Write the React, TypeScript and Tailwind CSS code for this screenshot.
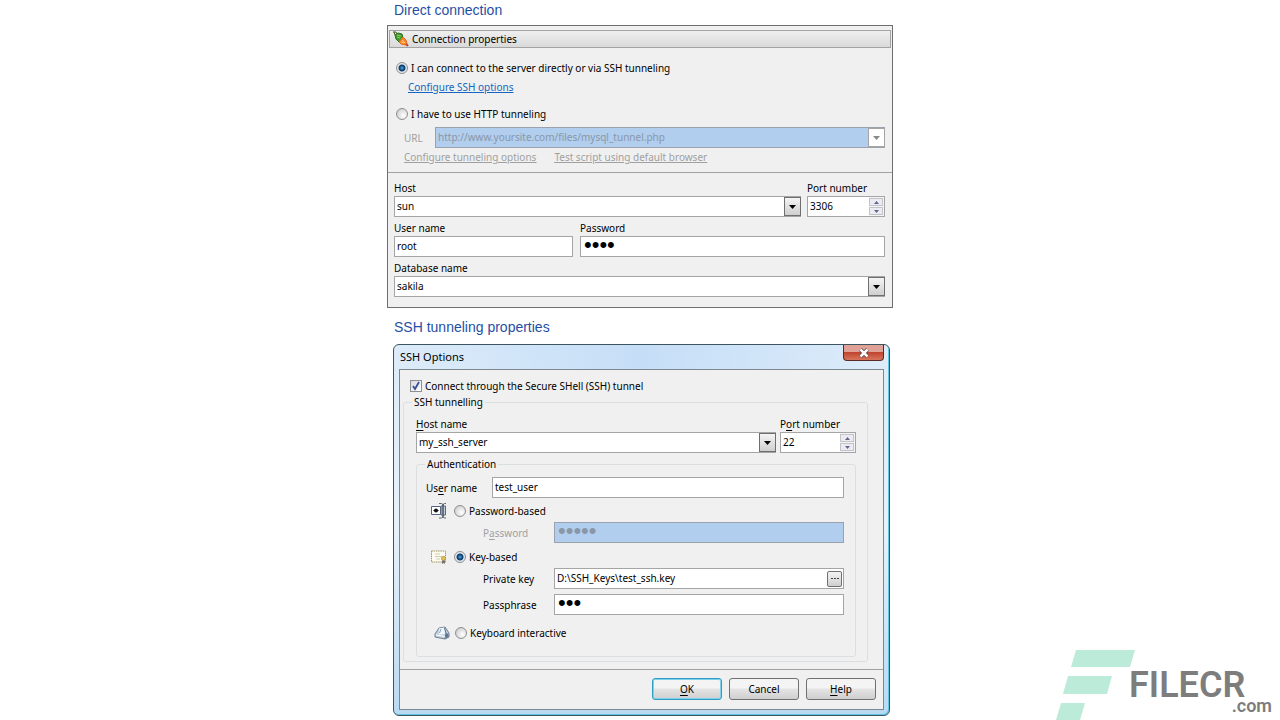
import { useState } from 'react'
import type { ReactNode } from 'react'
import clsx from 'clsx'

const box = 'block h-[21px] w-full appearance-none rounded-none border leading-[16px] outline-none'
const enabled = 'border-[#a5a5a5] bg-white text-black'
const disabledBox = 'border-[#9aa3ad] bg-[#b1ceee] text-[#8997a8]'
const plain = 'pl-[2px] pb-[2px] text-[10px]'
const dots = "pl-[3px] pb-[3px] font-['Liberation_Sans',sans-serif] text-[22px]"

function Underlined({ text, char }: { text: string; char: number }) {
  return (
    <>
      {text.slice(0, char)}
      <span className="underline underline-offset-2">{text[char]}</span>
      {text.slice(char + 1)}
    </>
  )
}

interface ComboProps {
  id: string
  value: string
  disabled?: boolean
}

function Combo({ id, value, disabled }: ComboProps) {
  return (
    <div className="relative w-full">
      <select id={id} disabled={disabled} className={clsx(box, plain, disabled ? disabledBox : enabled)}>
        <option>{value}</option>
      </select>
      <span
        className={clsx(
          'pointer-events-none absolute inset-y-0 right-0 my-px flex w-[17px] items-center justify-center border',
          disabled ? 'border-[#a5a5a5] bg-white' : 'border-[#6f6f6f] bg-linear-to-b from-[#f4f4f4] to-[#cfcfcf]',
        )}
      >
        <svg width="7" height="4" viewBox="0 0 7 4" className={disabled ? 'fill-[#8a8a8a]' : 'fill-black'}>
          <path d="M0 0h7L3.500 4z" />
        </svg>
      </span>
    </div>
  )
}

function Spinner({ id, initial }: { id: string; initial: number }) {
  const [value, setValue] = useState(initial)

  return (
    <div className="flex h-[21px] border border-[#a5a5a5] bg-white">
      <input
        id={id}
        value={value}
        inputMode="numeric"
        onChange={(e) => setValue(Number(e.target.value) || 0)}
        className="w-full min-w-0 pl-[2px] pb-px text-[10px] leading-[16px] outline-none"
      />
      <div className="flex w-[15px] shrink-0 flex-col gap-px bg-[#f4f4f4] py-px pr-px">
        <button
          type="button"
          aria-label="Increase"
          onClick={() => setValue(value + 1)}
          className="flex flex-1 items-center justify-center border border-[#c3c3cc] bg-[#ececf0]"
        >
          <svg width="5" height="3" viewBox="0 0 5 3" className="fill-[#5d6590]">
            <path d="M0 3h5L2.500 0z" />
          </svg>
        </button>
        <button
          type="button"
          aria-label="Decrease"
          onClick={() => setValue(value - 1)}
          className="flex flex-1 items-center justify-center border border-[#c3c3cc] bg-[#ececf0]"
        >
          <svg width="5" height="3" viewBox="0 0 5 3" className="fill-[#5d6590]">
            <path d="M0 0h5L2.500 3z" />
          </svg>
        </button>
      </div>
    </div>
  )
}

interface RadioProps {
  name: string
  checked: boolean
  onChange: () => void
  children: ReactNode
}

function Radio({ name, checked, onChange, children }: RadioProps) {
  return (
    <label className="flex items-center gap-[3px]">
      <input
        type="radio"
        name={name}
        checked={checked}
        onChange={onChange}
        className="size-3 shrink-0 appearance-none rounded-full border border-[#8e8f8f] bg-[radial-gradient(circle_at_65%_65%,#ffffff_0%,#e4e4e4_45%,#c2c2c2_100%)] checked:bg-[radial-gradient(circle_at_50%_50%,#5fb4e0_0%,#1f6aa8_20%,#12385f_42%,#dfe7ee_56%,#eef1f3_100%)]"
      />
      {children}
    </label>
  )
}

function PlugIcon() {
  return (
    <svg width="16" height="16" viewBox="0 0 16 16">
      <path d="M0 1h3l1 2M1 1l1 3" stroke="#4a5a1c" fill="none" />
      <path d="M2 4l3-2 4 1 1 4-4 4-3-3z" fill="#3f9a2c" stroke="#28701c" />
      <path d="M4 4l4 1M4 6l3 1" stroke="#8ed36c" />
      <path d="M6 11l4-5 3 3 1 4-2 1-4-1z" fill="#f58a2c" stroke="#e8691a" />
      <path d="M9 9l3 3M8 11l3 1" stroke="#ffc37a" />
      <path d="M13 13l2 2" stroke="#c8432a" strokeWidth="2" />
    </svg>
  )
}

function PasswordIcon() {
  return (
    <svg width="16" height="16" viewBox="0 0 16 16">
      <path d="M.5 3.500h9v8h-9z" fill="#fff" stroke="#56648a" />
      <circle cx="5" cy="7.500" r="2" fill="#111" />
      <path d="M2.500 7.500h5" stroke="#111" />
      <path d="M10 3h4.500v9H10z" fill="#c3ccda" stroke="#5f6878" />
      <path d="M8 .5h2.500l1.500 1 1.500-1H15M8 15h2.500l1.500-1 1.500 1H15" fill="none" stroke="#5d6470" />
      <path d="M12 1v13.500" stroke="#4a5464" strokeWidth="1.500" />
    </svg>
  )
}

function CertificateIcon() {
  return (
    <svg width="16" height="14" viewBox="0 0 16 14">
      <path d="M.5 1h14v11H.5z" fill="#fdfbef" stroke="#a0946a" strokeDasharray="1.500 .7" />
      <path d="M4 4h5M4 6.500h7M5 9h4" stroke="#cfcbb0" />
      <circle cx="12.500" cy="8.500" r="2" fill="#e2c750" stroke="#b79c3c" />
      <path d="M11 10.500V14l1.500-1L14 14v-3.500" fill="#77746c" />
    </svg>
  )
}

function KeyboardIcon() {
  return (
    <svg width="16" height="14" viewBox="0 0 16 14">
      <path d="M1 8l4-6 6-1 4 6v4l-4 2-10-2z" fill="#c3d0de" stroke="#6e7f92" />
      <path d="M5 2.500l5-1 1 6.500-6 .5z" fill="#f4f9fd" />
      <path d="M10.500 2l1.500 5-1 5.500" fill="none" stroke="#5a7592" />
      <path d="M12 7l2.500 1v3L12 12z" fill="#5e7690" />
      <path d="M2 9l9 1.500" fill="none" stroke="#fff" />
      <path d="M7 3L5.500 7" stroke="#7fa3c4" />
    </svg>
  )
}

function DirectConnection() {
  const [mode, setMode] = useState('direct')

  return (
    <form className="border border-[#6e6e6e] bg-[#f0f0f0] pb-[10px] pt-1">
      <div className="mx-px flex h-[18px] items-center gap-[3px] border border-[#a3a3a3] bg-linear-to-b from-[#efefef] to-[#dadada] pl-[3px]">
        <PlugIcon />
        <h2>Connection properties</h2>
      </div>
      <div className="border-b border-[#a0a0a0] pb-[7px] pl-2 pr-[7px] pt-3">
        <Radio name="mode" checked={mode === 'direct'} onChange={() => setMode('direct')}>
          I can connect to the server directly or via SSH tunneling
        </Radio>
        <a href="#ssh-options" className="ml-3 mt-[3px] block w-fit text-[#1566c0] underline">
          Configure SSH options
        </a>
        <div className="mt-[11px]">
          <Radio name="mode" checked={mode === 'http'} onChange={() => setMode('http')}>
            I have to use HTTP tunneling
          </Radio>
        </div>
        <div className="mt-[5px] flex items-center text-[#a0a0a0]">
          <label htmlFor="url" className="w-[39px] shrink-0 pl-2">
            URL
          </label>
          <Combo id="url" value="http://www.yoursite.com/files/mysql_tunnel.php" disabled />
        </div>
        <div className="mt-px flex gap-[18px] pl-2 text-[#a0a0a0] underline">
          <a href="#tunneling">Configure tunneling options</a>
          <a href="#test">Test script using default browser</a>
        </div>
      </div>
      <div className="pl-[6px] pr-[7px] pt-[7px]">
        <div className="flex gap-[6px]">
          <div className="flex-1">
            <label htmlFor="host" className="block">
              Host
            </label>
            <Combo id="host" value="sun" />
          </div>
          <div className="w-[78px]">
            <label htmlFor="port" className="block">
              Port number
            </label>
            <Spinner id="port" initial={3306} />
          </div>
        </div>
        <div className="mt-[3px] flex gap-[7px]">
          <div className="w-[179px]">
            <label htmlFor="user" className="block">
              User name
            </label>
            <input id="user" defaultValue="root" className={clsx(box, plain, enabled)} />
          </div>
          <div className="flex-1">
            <label htmlFor="password" className="block">
              Password
            </label>
            <input id="password" type="password" defaultValue="root" className={clsx(box, dots, enabled)} />
          </div>
        </div>
        <div className="mt-[3px]">
          <label htmlFor="database" className="block">
            Database name
          </label>
          <Combo id="database" value="sakila" />
        </div>
      </div>
    </form>
  )
}

const dialogButton =
  'h-[22px] w-[70px] rounded-[3px] border bg-linear-to-b from-[#f4f4f4] from-45% via-[#e4e4e4] via-50% to-[#cfcfcf] text-center'

function SshOptions() {
  const [auth, setAuth] = useState('key')

  return (
    <section
      id="ssh-options"
      className="ml-[6px] mr-[3px] rounded-[6px] border border-[#3c5560] bg-linear-to-b from-[#dcebf9] via-[#e6f1fb] to-[#b9d9f3] px-[5px] pb-[5px] shadow-[inset_-1px_-1px_0_#5fc8e0]"
    >
      <header className="flex h-6 items-start bg-linear-to-r from-transparent via-[#c5def7] to-transparent pl-px">
        <h2 className="flex-1 pt-1 text-[11px]">SSH Options</h2>
        <button
          type="button"
          aria-label="Close"
          className="flex h-4 w-[41px] items-center justify-center rounded-b-[4px] border border-t-0 border-[#5a2a28] bg-linear-to-b from-[#e0a296] from-45% via-[#c0452f] via-50% to-[#d8745c]"
        >
          <svg width="12" height="10" viewBox="0 0 12 10">
            <path d="M2.500 1.500l7 7M9.500 1.500l-7 7" stroke="#5b3a3a" strokeWidth="4" />
            <path d="M2.500 1.500l7 7M9.500 1.500l-7 7" stroke="#fff" strokeWidth="2.500" />
          </svg>
        </button>
      </header>
      <form className="border border-[#7d8790] bg-[#f0f0f0]">
        <div className="border-b border-[#a0a0a0] pb-[7px] pl-[3px] pr-[15px] pt-2">
          <label className="flex items-center gap-[3px] pl-[7px]">
            <span className="relative size-3 shrink-0">
              <input
                type="checkbox"
                defaultChecked
                className="peer block size-3 appearance-none border border-[#8e8f8f] bg-linear-to-br from-[#d5dae2] to-white"
              />
              <svg viewBox="0 0 12 12" className="pointer-events-none absolute inset-0 hidden peer-checked:block">
                <path d="M3 6l2 3 4-7" fill="none" stroke="#3a4f94" strokeWidth="1.800" />
              </svg>
            </span>
            Connect through the Secure SHell (SSH) tunnel
          </label>
          <fieldset className="rounded-[3px] border border-[#dcdfe2] pb-1 pl-3 pr-[11px]">
            <legend className="-ml-1 px-[2px]">SSH tunnelling</legend>
            <div className="mt-[6px] flex gap-1">
              <div className="flex-1">
                <label htmlFor="ssh-host" className="block">
                  <Underlined text="Host name" char={0} />
                </label>
                <Combo id="ssh-host" value="my_ssh_server" />
              </div>
              <div className="w-[76px]">
                <label htmlFor="ssh-port" className="block">
                  <Underlined text="Port number" char={1} />
                </label>
                <Spinner id="ssh-port" initial={22} />
              </div>
            </div>
            <fieldset className="mt-[3px] rounded-[3px] border border-[#dcdfe2] pb-[15px] pl-[9px] pr-[11px]">
              <legend className="-ml-px px-[2px]">Authentication</legend>
              <div className="mt-[5px] flex items-center">
                <label htmlFor="ssh-user" className="w-[66px] shrink-0">
                  <Underlined text="User name" char={2} />
                </label>
                <input id="ssh-user" defaultValue="test_user" className={clsx(box, plain, enabled)} />
              </div>
              <div className="mt-[5px] flex items-center gap-[7px] pl-[5px]">
                <PasswordIcon />
                <Radio name="auth" checked={auth === 'password'} onChange={() => setAuth('password')}>
                  Password-based
                </Radio>
              </div>
              <div className="mt-[3px] flex items-center pl-[57px]">
                <label htmlFor="ssh-password" className="w-[71px] shrink-0 text-[#a0a0a0]">
                  <Underlined text="Password" char={1} />
                </label>
                <input
                  id="ssh-password"
                  type="password"
                  disabled
                  defaultValue="pass1"
                  className={clsx(box, dots, disabledBox)}
                />
              </div>
              <div className="mt-[6px] flex items-center gap-[7px] pl-[5px]">
                <CertificateIcon />
                <Radio name="auth" checked={auth === 'key'} onChange={() => setAuth('key')}>
                  Key-based
                </Radio>
              </div>
              <div className="mt-[3px] flex items-center pl-[57px]">
                <label htmlFor="private-key" className="w-[71px] shrink-0">
                  Private key
                </label>
                <div className="flex h-[21px] w-full items-center border border-[#a5a5a5] bg-white pr-px">
                  <input
                    id="private-key"
                    defaultValue="D:\SSH_Keys\test_ssh.key"
                    className="min-w-0 flex-1 pb-px pl-[2px] text-[10px] leading-[16px] outline-none"
                  />
                  <button
                    type="button"
                    aria-label="Browse"
                    className="flex h-4 w-[15px] items-center justify-center rounded-[2px] border border-[#707070] bg-linear-to-b from-[#f4f4f4] to-[#cfcfcf]"
                  >
                    <svg width="8" height="2" viewBox="0 0 8 2" className="fill-[#444]">
                      <path d="M0 0h2v1H0zM3 0h2v1H3zM6 0h2v1H6z" />
                    </svg>
                  </button>
                </div>
              </div>
              <div className="mt-[5px] flex items-center pl-[57px]">
                <label htmlFor="passphrase" className="w-[71px] shrink-0">
                  Passphrase
                </label>
                <input id="passphrase" type="password" defaultValue="key" className={clsx(box, dots, enabled)} />
              </div>
              <div className="mt-[10px] flex items-center gap-[5px] pl-2">
                <KeyboardIcon />
                <Radio name="auth" checked={auth === 'keyboard'} onChange={() => setAuth('keyboard')}>
                  Keyboard interactive
                </Radio>
              </div>
            </fieldset>
          </fieldset>
        </div>
        <div className="flex justify-end gap-[7px] pb-[9px] pr-[7px] pt-2">
          <button type="button" className={clsx(dialogButton, 'border-[#2f9cc4] shadow-[inset_0_0_0_1px_#7fd0ea]')}>
            <Underlined text="OK" char={0} />
          </button>
          <button type="button" className={clsx(dialogButton, 'border-[#707070]')}>
            Cancel
          </button>
          <button type="button" className={clsx(dialogButton, 'border-[#707070]')}>
            <Underlined text="Help" char={0} />
          </button>
        </div>
      </form>
    </section>
  )
}

function Watermark() {
  return (
    <div className="absolute bottom-0 right-2 flex items-end font-['Roboto',sans-serif] font-semibold text-[#7d7d7d]">
      <svg width="80" height="70" viewBox="0 0 80 70" className="fill-[#bdebd9]">
        <path d="M20 0h59l-5 17H15zM12 26h44l-5 18H7zM5 53h24l-5 17H0z" />
      </svg>
      <div className="-ml-[7px] w-[143px] pb-[3px]">
        <div className="text-[36px] leading-5">FILECR</div>
        <div className="text-right text-[18px] leading-[22px]">.com</div>
      </div>
    </div>
  )
}

export default function App() {
  return (
    <div className="relative min-h-screen bg-white font-['Noto_Sans','Open_Sans',sans-serif] text-[10px] leading-4 text-black">
      <main className="mx-auto max-w-[506px]">
        <h1 className="pb-[5px] pl-[7px] pt-px font-['Liberation_Sans',sans-serif] text-[14px] leading-[19px] text-[#1f4fa5]">
          Direct connection
        </h1>
        <DirectConnection />
        <h1 className="pb-[7px] pl-[7px] pt-[10px] font-['Liberation_Sans',sans-serif] text-[14px] leading-[19px] text-[#1f4fa5]">
          SSH tunneling properties
        </h1>
        <SshOptions />
      </main>
      <Watermark />
    </div>
  )
}
